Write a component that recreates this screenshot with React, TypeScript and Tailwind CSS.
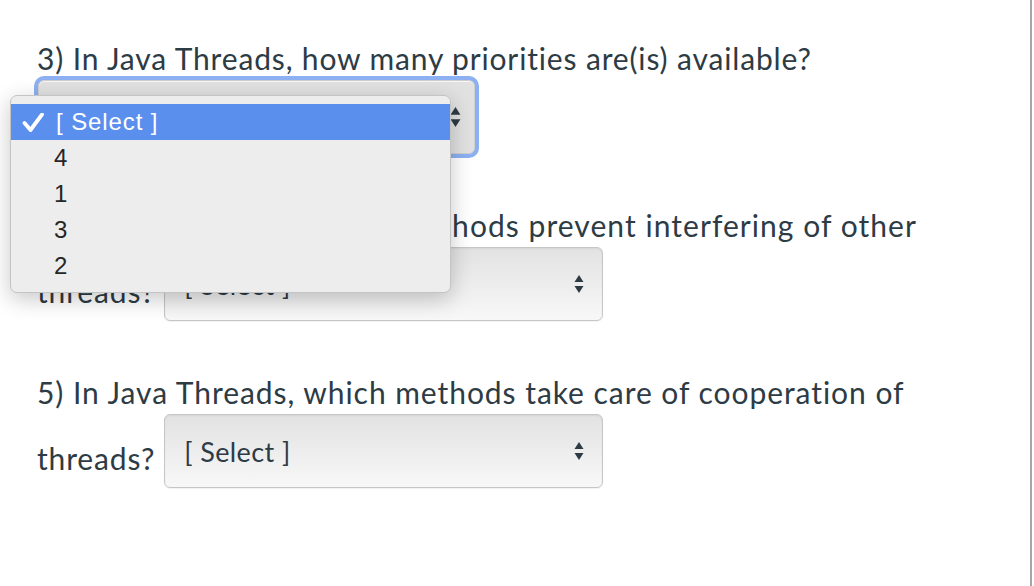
import React from "react";

function Arrows({ w = 10 }: { w?: number }) {
  return (
    <svg width={w} height={w * 2} viewBox="0 0 10 20">
      <path d="M5 1 L9.5 8 L0.5 8 Z" fill="#2d3b45" />
      <path d="M0.5 12 L9.5 12 L5 19 Z" fill="#2d3b45" />
    </svg>
  );
}

function SelectBox({ focused = false, label = "[ Select ]" }: { focused?: boolean; label?: string }) {
  if (focused) {
    return (
      <div className="w-[437px] h-[74px] rounded-[6px] bg-[#e1e1e1] border border-[#cfcfcf] ring-4 ring-[#8cb0f2] shadow-[inset_0_1px_0_rgba(255,255,255,0.7)] flex items-center justify-end pr-[13px]">
        <Arrows w={11} />
      </div>
    );
  }
  return (
    <div className="w-[439px] h-[74px] rounded-[6px] bg-gradient-to-b from-[#e2e2e2] to-[#f8f8f8] border border-[#c6c6c6] shadow-[inset_0_1px_2px_rgba(0,0,0,0.06),0_1px_1px_rgba(0,0,0,0.05)] flex items-center justify-between pl-[19px] pr-[18px]">
      <span className="text-[27px] tracking-[0.4px] leading-none text-[#2d3b45]">{label}</span>
      <Arrows />
    </div>
  );
}

export default function App() {
  const options = ["4", "1", "3", "2"];

  return (
    <div className="relative w-[1032px] h-[586px] bg-white border-r-2 border-[#a6a6a6] font-['Lato',sans-serif] text-[#2d3b45] overflow-hidden">
      <div className="pl-[37px] pt-[38px] flex flex-col gap-[51px]">
        {/* 3 */}
        <div>
          <div className="h-[40px] leading-[40px] text-[30px] tracking-[0.85px] whitespace-nowrap">
            3) In Java Threads, how many priorities are(is) available?
          </div>
          <div className="mt-[2px] ml-[1px]">
            <SelectBox focused />
          </div>
        </div>

        {/* 4 */}
        <div>
          <div className="h-[40px] leading-[40px] text-[30px] tracking-[1.05px] whitespace-nowrap">
            4) In Java Threads, which methods prevent interfering of other
          </div>
          <div className="mt-[2px] flex items-start gap-[9px]">
            <span className="mt-[24px] h-[40px] leading-[40px] text-[30px] tracking-[0.85px]">threads?</span>
            <SelectBox />
          </div>
        </div>

        {/* 5 */}
        <div>
          <div className="h-[40px] leading-[40px] text-[30px] tracking-[0.95px] whitespace-nowrap">
            5) In Java Threads, which methods take care of cooperation of
          </div>
          <div className="mt-[2px] flex items-start gap-[9px]">
            <span className="mt-[24px] h-[40px] leading-[40px] text-[30px] tracking-[0.85px]">threads?</span>
            <SelectBox />
          </div>
        </div>
      </div>

      {/* open dropdown of question 3 */}
      <div className="absolute left-[10px] top-[95px] w-[441px] rounded-[7px] bg-[#ededed] border border-[#c4c4c4] shadow-[0_6px_22px_rgba(0,0,0,0.22)] py-[8px] font-['Liberation_Sans',Arial,sans-serif] text-[24px] tracking-[0.9px] text-[#262626]">
        <div className="h-[36px] bg-[#5b8fee] text-white flex items-center">
          <svg width="22" height="19" viewBox="0 0 22 19" className="ml-[11px] mr-[12px]">
            <path d="M2.5 10 L8.5 17 L20 1.5" fill="none" stroke="#ffffff" strokeWidth="3.8" strokeLinecap="round" strokeLinejoin="round" />
          </svg>
          <span>[ Select ]</span>
        </div>
        {options.map((o) => (
          <div key={o} className="h-[36px] flex items-center pl-[43px]">
            {o}
          </div>
        ))}
      </div>
    </div>
  );
}
